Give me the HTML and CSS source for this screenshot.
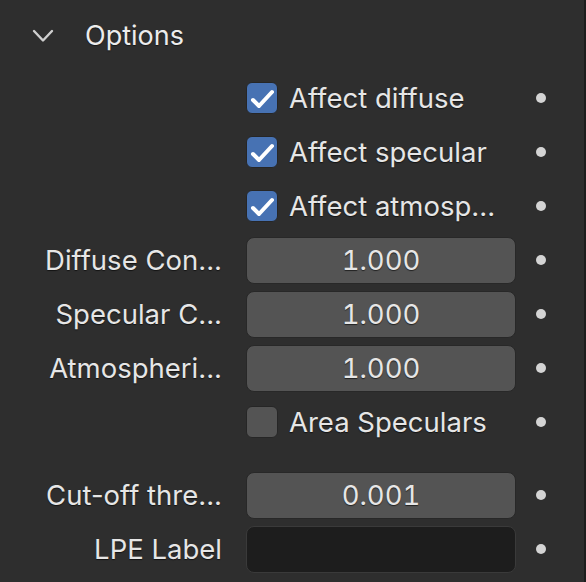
FILE: index.html
```html
<!DOCTYPE html>
<html>
<head>
<meta charset="utf-8">
<link rel="stylesheet" href="styles.css">
</head>
<body>
<div class="panel">
  <div class="header">
    <svg class="chevron" width="24" height="16" viewBox="0 0 24 16"><polyline points="2,3 11,12.5 20,3" fill="none" stroke="#cfcfcf" stroke-width="2.4" stroke-linecap="round" stroke-linejoin="round"/></svg>
    <span class="title">Options</span>
  </div>
  <div class="grid">
    <div class="label"></div>
    <div class="check-wrap"><span class="box on"><svg width="32" height="32" viewBox="0 0 32 32"><polyline points="7,18 13,24 26,10" fill="none" stroke="#fff" stroke-width="4" stroke-linecap="round" stroke-linejoin="round"/></svg></span><span class="ctext">Affect diffuse</span></div>
    <div class="dotcell"><span class="dot"></span></div>

    <div class="label"></div>
    <div class="check-wrap"><span class="box on"><svg width="32" height="32" viewBox="0 0 32 32"><polyline points="7,18 13,24 26,10" fill="none" stroke="#fff" stroke-width="4" stroke-linecap="round" stroke-linejoin="round"/></svg></span><span class="ctext">Affect specular</span></div>
    <div class="dotcell"><span class="dot"></span></div>

    <div class="label"></div>
    <div class="check-wrap"><span class="box on"><svg width="32" height="32" viewBox="0 0 32 32"><polyline points="7,18 13,24 26,10" fill="none" stroke="#fff" stroke-width="4" stroke-linecap="round" stroke-linejoin="round"/></svg></span><span class="ctext">Affect atmosp...</span></div>
    <div class="dotcell"><span class="dot"></span></div>

    <div class="label">Diffuse Con...</div>
    <div class="field num">1.000</div>
    <div class="dotcell"><span class="dot"></span></div>

    <div class="label">Specular C...</div>
    <div class="field num">1.000</div>
    <div class="dotcell"><span class="dot"></span></div>

    <div class="label">Atmospheri...</div>
    <div class="field num">1.000</div>
    <div class="dotcell"><span class="dot"></span></div>

    <div class="label"></div>
    <div class="check-wrap"><span class="box"></span><span class="ctext">Area Speculars</span></div>
    <div class="dotcell"><span class="dot"></span></div>

    <div class="spacer"></div>

    <div class="label">Cut-off thre...</div>
    <div class="field num">0.001</div>
    <div class="dotcell"><span class="dot"></span></div>

    <div class="label">LPE Label</div>
    <div class="field text"></div>
    <div class="dotcell"><span class="dot"></span></div>
  </div>
</div>
</body>
</html>
```

FILE: styles.css
```css
html, body {
  margin: 0;
  padding: 0;
  background: #2e2e2e;
}
body {
  width: 586px;
  height: 582px;
  overflow: hidden;
  font-family: Inter, "Noto Sans", sans-serif;
  color: #e6e6e6;
}
.panel {
  width: 584px;
  height: 582px;
  border-right: 2px solid #1d1d1d;
  background: #2e2e2e;
}
.header {
  height: 71px;
  display: flex;
  align-items: center;
  padding-left: 32px;
  box-sizing: border-box;
}
.chevron {
  display: block;
}
.title {
  margin-left: 29px;
  font-size: 27px;
  color: #ececec;
  text-shadow: 0 1px 1px rgba(0,0,0,0.5);
}
.grid {
  display: grid;
  grid-template-columns: 246px 270px 50px;
  grid-template-rows: repeat(7, 54px) 19px 54px 54px;
  align-items: center;
}
.grid > .spacer {
  grid-column: 1 / -1;
  height: 19px;
}
.label {
  text-align: right;
  padding-right: 24px;
  font-size: 27.5px;
  white-space: nowrap;
  text-shadow: 0 1px 1px rgba(0,0,0,0.6);
}
.check-wrap {
  display: flex;
  align-items: center;
  white-space: nowrap;
}
.box {
  width: 32px;
  height: 32px;
  flex: none;
  box-sizing: border-box;
  border-radius: 6px;
  background: #545454;
  border: 1.5px solid #262626;
  display: flex;
  align-items: center;
  justify-content: center;
  overflow: hidden;
}
.box.on {
  background: #4772b3;
}
.box svg {
  display: block;
  flex: none;
}
.ctext {
  margin-left: 11px;
  font-size: 27.5px;
  text-shadow: 0 1px 1px rgba(0,0,0,0.6);
}
.field {
  height: 47px;
  box-sizing: border-box;
  border-radius: 8px;
  border: 1.5px solid #282828;
  display: flex;
  align-items: center;
  justify-content: center;
  font-size: 27.5px;
  font-variant-numeric: tabular-nums;
  text-shadow: 0 1px 1px rgba(0,0,0,0.6);
}
.field.num {
  background: #545454;
}
.field.text {
  background: #1d1d1d;
  border-color: #3a3a3a;
}
.dotcell {
  display: flex;
  justify-content: flex-start;
  padding-left: 20px;
  box-sizing: border-box;
}
.dot {
  width: 10px;
  height: 10px;
  border-radius: 50%;
  background: #d4d4d4;
}
```
